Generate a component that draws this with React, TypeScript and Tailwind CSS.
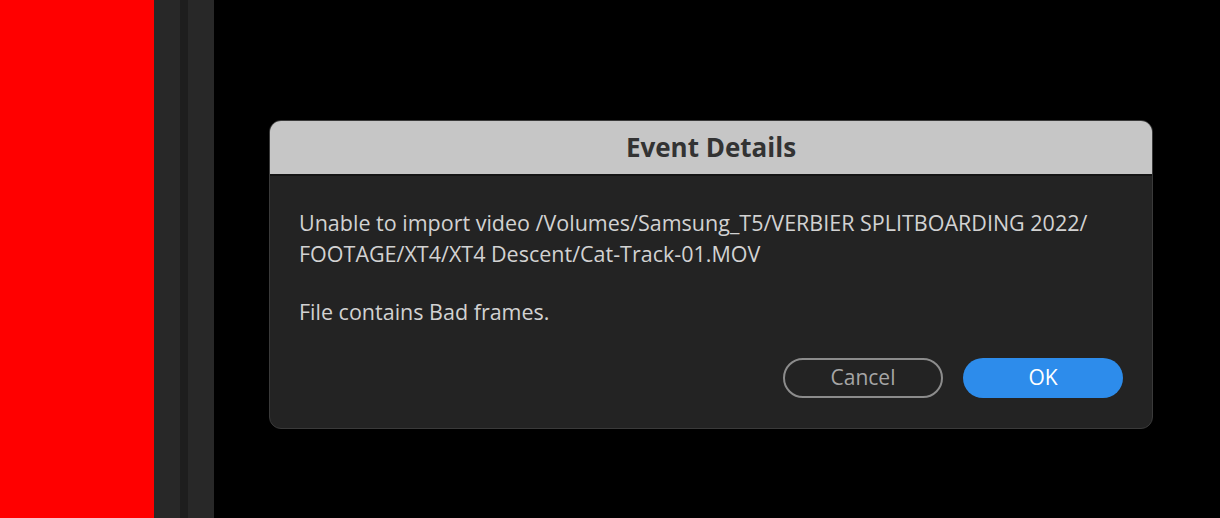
import React from "react";

function EventDetailsDialog() {
  return (
    <div className="w-[884px] overflow-hidden rounded-[12px] border border-[#3a3a3a] bg-[#232323] shadow-[0_0_0_1px_#000]">
      <div className="flex h-[55px] items-center justify-center bg-[#c6c6c6] border-b-2 border-[#141414]">
        <h1 className="text-[26px] font-bold text-[#333333]">Event Details</h1>
      </div>
      <div className="px-[29px] pt-[31px] pb-[30px]">
        <p className="text-[21.5px] leading-[31px] text-[#d2d2d2]">
          Unable to import video /Volumes/Samsung_T5/VERBIER SPLITBOARDING 2022/
          <br />
          FOOTAGE/XT4/XT4 Descent/Cat-Track-01.MOV
        </p>
        <p className="mt-[27px] text-[21.5px] leading-[31px] text-[#d2d2d2]">
          File contains Bad frames.
        </p>
        <div className="mt-[31px] flex justify-end gap-[20px]">
          <button className="h-[40px] w-[160px] rounded-full border-2 border-[#8c8c8c] text-[21px] text-[#a6a6a6]">
            Cancel
          </button>
          <button className="h-[40px] w-[160px] rounded-full bg-[#2d8ceb] text-[21px] font-medium text-white">
            OK
          </button>
        </div>
      </div>
    </div>
  );
}

export default function App() {
  return (
    <div className="flex h-[518px] w-[1220px] bg-black font-['Open_Sans',sans-serif]">
      <div className="w-[154px] bg-[#ff0000]" />
      <div className="w-[26px] bg-[#282828]" />
      <div className="w-[8px] bg-[#1e1e1e]" />
      <div className="w-[26px] bg-[#282828]" />
      <div className="flex-1 pl-[55px] pt-[120px]">
        <EventDetailsDialog />
      </div>
    </div>
  );
}
